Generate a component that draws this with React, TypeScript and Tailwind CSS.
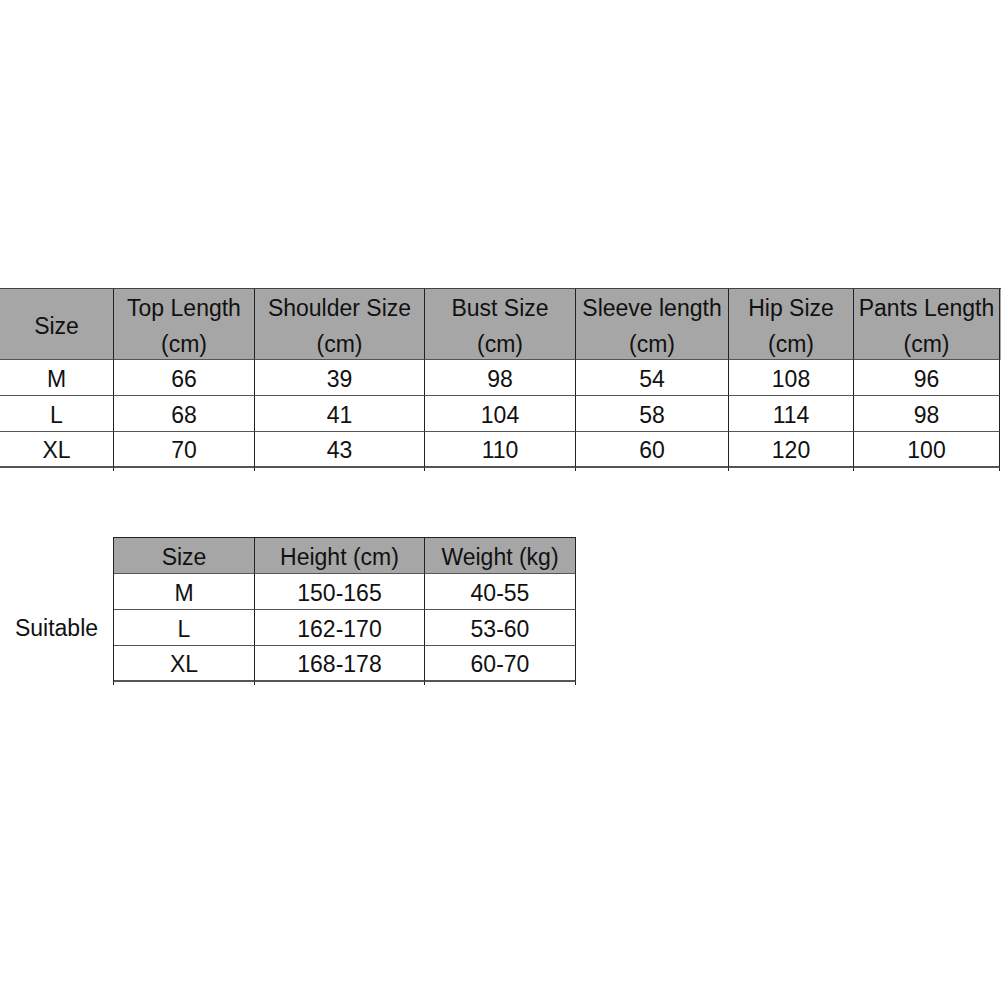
import React from 'react';

const cols = ['w-[114px]', 'w-[141px]', 'w-[170px]', 'w-[151px]', 'w-[153px]', 'w-[125px]', 'w-[146px]'];

const headers = [
  ['Size'],
  ['Top Length', '(cm)'],
  ['Shoulder Size', '(cm)'],
  ['Bust Size', '(cm)'],
  ['Sleeve length', '(cm)'],
  ['Hip Size', '(cm)'],
  ['Pants Length', '(cm)'],
];

const sizeRows = [
  ['M', '66', '39', '98', '54', '108', '96'],
  ['L', '68', '41', '104', '58', '114', '98'],
  ['XL', '70', '43', '110', '60', '120', '100'],
];

const fitCols = ['w-[141px]', 'w-[170px]', 'w-[151px]'];
const fitHeaders = ['Size', 'Height (cm)', 'Weight (kg)'];
const fitRows = [
  ['M', '150-165', '40-55'],
  ['L', '162-170', '53-60'],
  ['XL', '168-178', '60-70'],
];

export default function App() {
  return (
    <div className="min-h-[1001px] w-[1001px] bg-white pt-[288px] font-['Liberation_Sans',Arial,sans-serif] text-[23px] text-[#111]">
      {/* measurements table */}
      <div className="border-t border-[#444]">
        <div className="flex h-[71px] bg-[#a6a6a6]">
          {headers.map((h, i) => (
            <div
              key={i}
              className={`${cols[i]} flex flex-col items-center justify-center border-b border-r border-b-[#555] border-r-[#222] pt-[3px] leading-[36px]`}
            >
              {h.map((line) => (
                <span key={line}>{line}</span>
              ))}
            </div>
          ))}
        </div>
        {sizeRows.map((row, r) => (
          <div key={r} className="flex h-[36px]">
            {row.map((cell, i) => (
              <div
                key={i}
                className={`${cols[i]} flex items-center justify-center border-r border-r-[#222] pt-[3px] ${r === 2 ? 'border-b-2' : 'border-b'} border-b-[#555]`}
              >
                {cell}
              </div>
            ))}
          </div>
        ))}
        <div className="flex h-[3px]">
          {cols.map((c, i) => (
            <div key={i} className={`${c} border-r border-r-[#222]`} />
          ))}
        </div>
      </div>

      {/* suitable table */}
      <div className="mt-[66px] flex">
        <div className="flex w-[113px] items-center justify-center pt-[34px]">Suitable</div>
        <div>
          <div className="border-l border-t border-[#222]">
            <div className="flex h-[36px] bg-[#a6a6a6]">
              {fitHeaders.map((h, i) => (
                <div key={h} className={`${fitCols[i]} flex items-center justify-center border-b border-r border-b-[#555] border-r-[#222] pt-[3px]`}>
                  {h}
                </div>
              ))}
            </div>
            {fitRows.map((row, r) => (
              <div key={r} className="flex h-[36px]">
                {row.map((cell, i) => (
                  <div
                    key={i}
                    className={`${fitCols[i]} flex items-center justify-center border-r border-r-[#222] pt-[3px] ${r === 2 ? 'border-b-2' : 'border-b'} border-b-[#555]`}
                  >
                    {cell}
                  </div>
                ))}
              </div>
            ))}
          </div>
          <div className="flex h-[3px] border-l border-[#222]">
            {fitCols.map((c, i) => (
              <div key={i} className={`${c} border-r border-r-[#222]`} />
            ))}
          </div>
        </div>
      </div>
    </div>
  );
}
